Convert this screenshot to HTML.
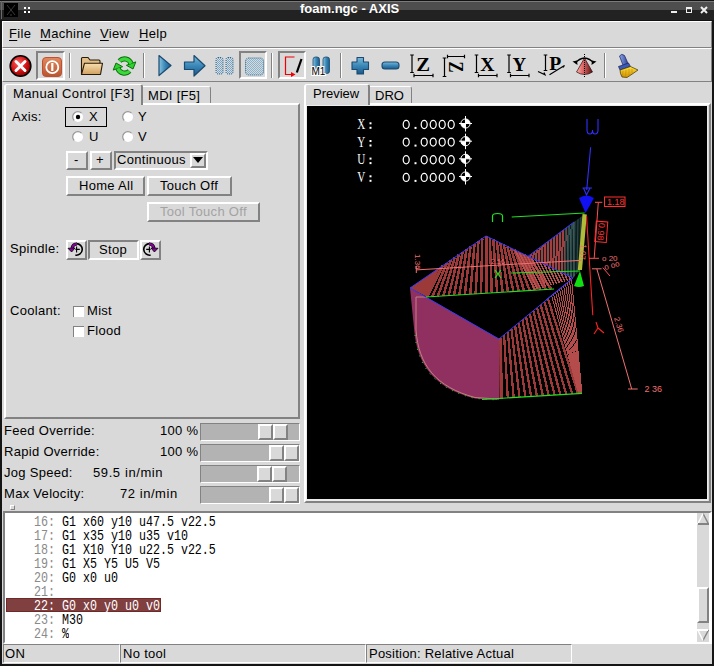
<!DOCTYPE html>
<html><head><meta charset="utf-8">
<style>
*{box-sizing:border-box;margin:0;padding:0}
html,body{width:714px;height:666px;overflow:hidden;background:#151515}
body{position:relative;font-family:"Liberation Sans",sans-serif;font-size:13px;color:#000}
.a{position:absolute}
.t{position:absolute;font-size:13px;line-height:13px;white-space:pre;letter-spacing:0.3px}
.r{position:absolute;border:2px solid;border-color:#fff #828282 #828282 #fff;background:#d9d9d9}
.s{position:absolute;border:2px solid;border-color:#828282 #fff #fff #828282;background:#d9d9d9}
.r1{position:absolute;border:1px solid;border-color:#fff #828282 #828282 #fff}
.s1{position:absolute;border:1px solid;border-color:#828282 #fff #fff #828282}
.u{text-decoration:underline;text-underline-offset:2px}
.sep{position:absolute;width:2px;border-left:1px solid #828282;border-right:1px solid #fff}
.mono{font-family:"Liberation Mono",monospace}
</style></head><body>
<!-- title bar -->
<div class="a" style="left:0;top:0;width:714px;height:21px;background:linear-gradient(#111 0,#111 1px,#7a7a7a 1px,#7a7a7a 2px,#4e4e4e 2px,#4e4e4e 10px,#222 10px,#222 20px,#111 20px)"></div>
<div class="a" style="left:1px;top:1px;width:1px;height:18px;background:#6a6a6a"></div>
<div class="a" style="left:4px;top:3px;width:14px;height:14px;background:#000"></div>
<svg class="a" style="left:4px;top:3px" width="14" height="14"><path d="M3 2 L11 12 M11 2 L3 12 M7 11 L7 13" stroke="#3a3a3a" stroke-width="1" fill="none"/></svg>
<div class="a" style="left:24px;top:7px;width:2px;height:2px;background:#fff"></div>
<div class="a" style="left:28px;top:7px;width:2px;height:2px;background:#fff"></div>
<div class="a" style="left:24px;top:11px;width:2px;height:2px;background:#fff"></div>
<div class="a" style="left:28px;top:11px;width:2px;height:2px;background:#fff"></div>
<div class="t" style="left:300px;top:2px;color:#fff;font-weight:bold;font-size:13px;letter-spacing:0">foam.ngc - AXIS</div>
<div class="a" style="left:671px;top:11px;width:6px;height:2px;background:#eee"></div>
<div class="a" style="left:686px;top:7px;width:6px;height:6px;border:1px solid #eee;border-top-width:2px"></div>
<svg class="a" style="left:700px;top:6px" width="8" height="8"><path d="M1 1 L7 7 M7 1 L1 7" stroke="#eee" stroke-width="2"/></svg>

<!-- main background -->
<div class="a" style="left:2px;top:21px;width:710px;height:643px;background:#d9d9d9"></div>
<!-- menubar -->
<div class="r1" style="left:2px;top:21px;width:710px;height:27px"></div>
<div class="t" style="left:9px;top:27px"><span class="u">F</span>ile</div>
<div class="t" style="left:40px;top:27px"><span class="u">M</span>achine</div>
<div class="t" style="left:100px;top:27px"><span class="u">V</span>iew</div>
<div class="t" style="left:139px;top:27px"><span class="u">H</span>elp</div>
<!-- toolbar -->
<div class="r1" style="left:2px;top:48px;width:710px;height:34px"></div>
<div class="s" style="left:36px;top:51px;width:29px;height:29px"></div>
<div class="s" style="left:239px;top:51px;width:28px;height:28px"></div>
<div class="s" style="left:278px;top:51px;width:28px;height:28px"></div>
<div class="sep" style="left:69px;top:53px;height:25px"></div>
<div class="sep" style="left:143px;top:53px;height:25px"></div>
<div class="sep" style="left:271px;top:53px;height:25px"></div>
<div class="sep" style="left:340px;top:53px;height:25px"></div>
<div class="sep" style="left:604px;top:53px;height:25px"></div><svg class="a" style="left:0;top:0" width="714" height="90" viewBox="0 0 714 90">
<defs>
<radialGradient id="gRed" cx="0.4" cy="0.35" r="0.7"><stop offset="0" stop-color="#ff6060"/><stop offset="0.6" stop-color="#d01010"/><stop offset="1" stop-color="#800000"/></radialGradient>
<linearGradient id="gOr" x1="0" y1="0" x2="0" y2="1"><stop offset="0" stop-color="#e08a60"/><stop offset="1" stop-color="#b85530"/></linearGradient>
<linearGradient id="gBlue" x1="0" y1="0" x2="0" y2="1"><stop offset="0" stop-color="#7ab8d8"/><stop offset="0.5" stop-color="#3a88b8"/><stop offset="1" stop-color="#1a5888"/></linearGradient>
<linearGradient id="gBlueH" x1="0" y1="0" x2="1" y2="0"><stop offset="0" stop-color="#8ac4e0"/><stop offset="0.5" stop-color="#3a88b8"/><stop offset="1" stop-color="#1a5a8a"/></linearGradient>
<linearGradient id="gTan" x1="0" y1="0" x2="0" y2="1"><stop offset="0" stop-color="#f8e0b0"/><stop offset="1" stop-color="#d0a060"/></linearGradient>
<linearGradient id="gGreen" x1="0" y1="0" x2="0" y2="1"><stop offset="0" stop-color="#90f090"/><stop offset="1" stop-color="#10a010"/></linearGradient>
<linearGradient id="gCone" x1="0" y1="0" x2="1" y2="0"><stop offset="0" stop-color="#f8b0a8"/><stop offset="0.45" stop-color="#d86060"/><stop offset="1" stop-color="#501010"/></linearGradient>
<pattern id="dots" width="2" height="2" patternUnits="userSpaceOnUse"><rect width="2" height="2" fill="#d9d9d9"/><rect width="1" height="1" fill="#7aa8c8"/><rect x="1" y="1" width="1" height="1" fill="#7aa8c8"/></pattern>
<pattern id="dots2" width="2" height="2" patternUnits="userSpaceOnUse"><rect width="2" height="2" fill="#d9d9d9"/><rect width="1" height="1" fill="#88b4d0"/><rect x="1" y="1" width="1" height="1" fill="#88b4d0"/></pattern>
</defs>
<!-- estop -->
<circle cx="20.5" cy="66" r="10.3" fill="url(#gRed)" stroke="#000" stroke-width="1.6"/>
<path d="M16 61.5 L25 70.5 M25 61.5 L16 70.5" stroke="#fff" stroke-width="3" stroke-linecap="round"/>
<!-- power -->
<rect x="42.5" y="57.5" width="19" height="19" rx="3.5" fill="url(#gOr)" stroke="#c05030" stroke-width="1"/>
<circle cx="52.3" cy="67.2" r="6" fill="none" stroke="#fff" stroke-width="1.8"/>
<path d="M52.3 63 V71" stroke="#fff" stroke-width="2.2"/>
<!-- folder -->
<path d="M81.5 74.5 V58.5 Q81.5 57.5 82.5 57.5 H88 L90 60 H99 Q100 60 100 61 V63" fill="#e0c088" stroke="#2a1a08" stroke-width="1.1"/>
<path d="M84.5 63.2 H102.5 L100.5 74.5 H81.5 Z" fill="url(#gTan)" stroke="#2a1a08" stroke-width="1.1" stroke-linejoin="round"/>
<!-- reload -->
<g>
<path d="M119.5 61 A7 7 0 0 1 131.1 63.6" stroke="#0a700a" stroke-width="5.2" fill="none"/>
<path d="M135.8 61.9 L126.4 65.3 L133 69 Z" fill="#30d030" stroke="#0a700a" stroke-width="1" stroke-linejoin="round"/>
<path d="M119.5 61 A7 7 0 0 1 131.1 63.6" stroke="#3ad83a" stroke-width="3.2" fill="none"/>
</g>
<g transform="rotate(180 124.5 66)">
<path d="M119.5 61 A7 7 0 0 1 131.1 63.6" stroke="#0a700a" stroke-width="5.2" fill="none"/>
<path d="M135.8 61.9 L126.4 65.3 L133 69 Z" fill="#30d030" stroke="#0a700a" stroke-width="1" stroke-linejoin="round"/>
<path d="M119.5 61 A7 7 0 0 1 131.1 63.6" stroke="#3ad83a" stroke-width="3.2" fill="none"/>
</g>
<!-- play -->
<path d="M159 55.5 L171 65.5 L159 75.5 Z" fill="url(#gBlueH)" stroke="#1a4a70" stroke-width="1.2" stroke-linejoin="round"/>
<!-- step -->
<path d="M184.5 62 H194 V55.5 L205 65.8 L194 76 V69.5 H184.5 Z" fill="url(#gBlue)" stroke="#1a4a70" stroke-width="1.2" stroke-linejoin="round"/>
<!-- pause disabled -->
<rect x="216" y="57.5" width="7" height="16.5" rx="2" fill="url(#dots)" stroke="#2a6890" stroke-width="1" stroke-dasharray="1 1"/>
<rect x="226" y="57.5" width="7" height="16.5" rx="2" fill="url(#dots)" stroke="#2a6890" stroke-width="1" stroke-dasharray="1 1"/>
<!-- stop disabled -->
<rect x="245.5" y="58" width="18" height="17" rx="3" fill="url(#dots2)" stroke="#2a6890" stroke-width="1" stroke-dasharray="1 1"/>
<!-- block delete -->
<path d="M294.5 57 H285.5 V74.5 H292" stroke="#f00000" stroke-width="1.2" fill="none"/>
<path d="M291 72 L295.5 74.5 L291 77 Z" fill="#f00000"/>
<path d="M301.5 59 L296.8 72.5" stroke="#000" stroke-width="2.2"/>
<!-- M1 -->
<rect x="313" y="57" width="6.5" height="16.5" rx="2.5" fill="url(#gBlueH)" stroke="#1a4a70" stroke-width="0.8"/>
<rect x="323" y="57" width="6.5" height="16.5" rx="2.5" fill="url(#gBlueH)" stroke="#1a4a70" stroke-width="0.8"/>
<text x="311.5" y="74.5" font-family="Liberation Sans" font-size="10" fill="#000" stroke="#fff" stroke-width="2" paint-order="stroke">M1</text>
<!-- plus / minus -->
<path d="M357 57.5 h6.5 a0 0 0 0 1 0 0 v4.5 h5 v7.5 h-5 v4.5 h-6.5 v-4.5 h-5 v-7.5 h5 z" fill="url(#gBlue)" stroke="#1a4a70" stroke-width="1.1" stroke-linejoin="round"/>
<rect x="382" y="62" width="17" height="7" rx="3" fill="url(#gBlue)" stroke="#1a4a70" stroke-width="1.1"/>
<path d="M410.2 55 H413.8 M412 55 V72.5 M410.2 72.5 H413.8" stroke="#000" stroke-width="1.2" fill="none"/><path d="M414 75.5 H433 M414 73.7 V77.3 M433 73.7 V77.3" stroke="#000" stroke-width="1.2" fill="none"/><text x="416.3" y="71" font-family="Liberation Serif" font-size="19.5" font-weight="bold" textLength="13.8" lengthAdjust="spacingAndGlyphs">Z</text><path d="M442.7 58 H446.3 M444.5 58 V76.5 M442.7 76.5 H446.3" stroke="#000" stroke-width="1.2" fill="none"/><path d="M447.5 56.5 H464.5 M447.5 54.7 V58.3 M464.5 54.7 V58.3" stroke="#000" stroke-width="1.2" fill="none"/><text transform="translate(449 61.5) rotate(90)" x="0" y="0" font-family="Liberation Serif" font-size="20.5" font-weight="bold" textLength="11" lengthAdjust="spacingAndGlyphs">Z</text><path d="M474.7 55 H478.3 M476.5 55 V72.5 M474.7 72.5 H478.3" stroke="#000" stroke-width="1.2" fill="none"/><path d="M478.5 75.5 H497 M478.5 73.7 V77.3 M497 73.7 V77.3" stroke="#000" stroke-width="1.2" fill="none"/><text x="480.3" y="71" font-family="Liberation Serif" font-size="19.5" font-weight="bold" textLength="14.2" lengthAdjust="spacingAndGlyphs">X</text><path d="M507.2 55 H510.8 M509 55 V72.5 M507.2 72.5 H510.8" stroke="#000" stroke-width="1.2" fill="none"/><path d="M510.5 75.5 H529 M510.5 73.7 V77.3 M529 73.7 V77.3" stroke="#000" stroke-width="1.2" fill="none"/><text x="512.5" y="71" font-family="Liberation Serif" font-size="19.5" font-weight="bold" textLength="13.6" lengthAdjust="spacingAndGlyphs">Y</text><path d="M543.7 55 H547.3 M545.5 55 V70.5 M543.7 70.5 H547.3" stroke="#000" stroke-width="1.2" fill="none"/><text x="549.2" y="70" font-family="Liberation Serif" font-size="18.5" font-weight="bold" textLength="12" lengthAdjust="spacingAndGlyphs">P</text><path d="M538 71.5 L545 74.8 L544 72.5 M549.5 74.8 L564.5 65.5 L563 67.5" stroke="#000" stroke-width="1.2" fill="none"/><path d="M584.5 58 L576.5 72 Q584.5 77 592.5 72 Z" fill="url(#gCone)" stroke="#301010" stroke-width="0.7"/>
<path d="M575.5 63 Q579 58.5 584.5 58 M593.5 63 Q590 58.5 584.5 58" stroke="#000" stroke-width="1.3" fill="none"/>
<path d="M572.5 61.5 L577.5 65 L577 60.5 Z M596.5 61.5 L591.5 65 L592 60.5 Z" fill="#000"/>
<path d="M584.5 54 V78" stroke="#000" stroke-width="1" stroke-dasharray="1 1"/>
<defs><linearGradient id="gHandle" x1="0" y1="0" x2="1" y2="0"><stop offset="0" stop-color="#8aa8e8"/><stop offset="1" stop-color="#2a3a90"/></linearGradient>
<linearGradient id="gBr" x1="0" y1="0" x2="0" y2="1"><stop offset="0" stop-color="#ffe040"/><stop offset="1" stop-color="#d09000"/></linearGradient></defs>
<path d="M619.5 56 Q621.5 53 624.5 55.5 L628.5 64.5 L623.5 66.5 Z" fill="url(#gHandle)" stroke="#1a2060" stroke-width="0.7"/>
<path d="M618.5 66.5 L628.5 63 L630.5 66.5 L620 70 Z" fill="#3a5ab8" stroke="#1a2060" stroke-width="0.7"/>
<path d="M620 70 L630.5 66.5 L638 70 L633 73.5 L627 77.5 L622 77 L620.5 73.5 Z" fill="url(#gBr)" stroke="#403000" stroke-width="0.7"/>
<path d="M623 71 L622.5 76 M626 70 L625.5 76.5 M629 69 L629 75.5 M632 69 L632 73" stroke="#c08800" stroke-width="0.6"/>
</svg>

<!-- left notebook -->
<div class="r" style="left:4px;top:103px;width:296px;height:316px"></div>
<!-- tabs -->
<div class="a" style="left:143px;top:86px;width:68px;height:17px;border-style:solid;border-width:1px 1px 0 0;border-color:#fff #828282;border-radius:0 3px 0 0;background:#d9d9d9"></div>
<div class="t" style="left:148px;top:89px">MDI [F5]</div>
<div class="a" style="left:4px;top:84px;width:139px;height:21px;border-style:solid;border-width:1px 2px 0 2px;border-color:#fff #828282 #828282 #fff;border-radius:3px 3px 0 0;background:#d9d9d9"></div>
<div class="t" style="left:13px;top:87px;letter-spacing:0.39px">Manual Control [F3]</div>

<!-- Axis -->
<div class="t" style="left:12px;top:110px">Axis:</div>
<div class="a" style="left:65px;top:107px;width:42px;height:20px;border:1px solid #000"></div>
<svg class="a" style="left:71px;top:110px" width="14" height="14"><circle cx="7" cy="7" r="5" fill="#fff"/><path d="M3.2 10.5 A5 5 0 0 1 10.5 3.2" stroke="#9a9a9a" stroke-width="1.2" fill="none"/><circle cx="7" cy="7" r="2.2" fill="#000"/></svg><svg class="a" style="left:120.5px;top:110px" width="14" height="14"><circle cx="7" cy="7" r="5" fill="#fff"/><path d="M3.2 10.5 A5 5 0 0 1 10.5 3.2" stroke="#9a9a9a" stroke-width="1.2" fill="none"/></svg><svg class="a" style="left:71px;top:129.5px" width="14" height="14"><circle cx="7" cy="7" r="5" fill="#fff"/><path d="M3.2 10.5 A5 5 0 0 1 10.5 3.2" stroke="#9a9a9a" stroke-width="1.2" fill="none"/></svg><svg class="a" style="left:120.5px;top:129.5px" width="14" height="14"><circle cx="7" cy="7" r="5" fill="#fff"/><path d="M3.2 10.5 A5 5 0 0 1 10.5 3.2" stroke="#9a9a9a" stroke-width="1.2" fill="none"/></svg>
<div class="t" style="left:89px;top:110px">X</div>
<div class="t" style="left:138px;top:110px">Y</div>
<div class="t" style="left:89px;top:130px">U</div>
<div class="t" style="left:138px;top:130px">V</div>

<!-- jog -->
<div class="r" style="left:66px;top:151px;width:22px;height:19px"></div>
<div class="t" style="left:74px;top:153px">-</div>
<div class="r" style="left:90px;top:151px;width:22px;height:19px"></div>
<div class="t" style="left:96px;top:153px">+</div>
<div class="s" style="left:114px;top:151px;width:94px;height:19px"></div>
<div class="t" style="left:117px;top:153px">Continuous</div>
<div class="r" style="left:190px;top:153px;width:16px;height:15px"></div>
<svg class="a" style="left:193px;top:157px" width="10" height="7"><path d="M0 0 H10 L5 6 Z" fill="#000"/></svg>

<div class="r" style="left:66px;top:176px;width:79px;height:20px"></div>
<div class="t" style="left:79px;top:179px">Home All</div>
<div class="r" style="left:147px;top:176px;width:85px;height:20px"></div>
<div class="t" style="left:160px;top:179px">Touch Off</div>
<div class="r" style="left:147px;top:202px;width:113px;height:20px"></div>
<div class="t" style="left:160px;top:205px;color:#a3a3a3">Tool Touch Off</div>

<!-- spindle -->
<div class="t" style="left:10px;top:242px">Spindle:</div>
<div class="r" style="left:66px;top:240px;width:21px;height:20px"></div>
<div class="s" style="left:88px;top:240px;width:51px;height:20px"></div>
<div class="t" style="left:99px;top:243px">Stop</div>
<div class="r" style="left:140px;top:240px;width:21px;height:20px"></div>
<svg class="a" style="left:66px;top:240px" width="20" height="20"><path d="M10.2 3.6 A5.8 5.8 0 1 1 9.4 15.1" stroke="#000" stroke-width="1.6" fill="none"/><path d="M10.6 6.4 V12.6 M9.4 9.4 H13.8" stroke="#000" stroke-width="1.1"/><path d="M11 4 Q7 4 6 8.2" stroke="#000" stroke-width="3.2" fill="none"/><path d="M11 4 Q7 4 6 8.2" stroke="#8a00a0" stroke-width="1.8" fill="none"/><path d="M2 8.3 L9 8 L5.6 12 Z" fill="#8a00a0" stroke="#000" stroke-width="0.8" stroke-linejoin="round"/></svg>
<svg class="a" style="left:140px;top:240px;transform:scaleX(-1)" width="20" height="20"><path d="M10.2 3.6 A5.8 5.8 0 1 1 9.4 15.1" stroke="#000" stroke-width="1.6" fill="none"/><path d="M10.6 6.4 V12.6 M9.4 9.4 H13.8" stroke="#000" stroke-width="1.1"/><path d="M11 4 Q7 4 6 8.2" stroke="#000" stroke-width="3.2" fill="none"/><path d="M11 4 Q7 4 6 8.2" stroke="#8a00a0" stroke-width="1.8" fill="none"/><path d="M2 8.3 L9 8 L5.6 12 Z" fill="#8a00a0" stroke="#000" stroke-width="0.8" stroke-linejoin="round"/></svg>

<!-- coolant -->
<div class="t" style="left:10px;top:304px">Coolant:</div>
<div class="a" style="left:73px;top:306px;width:11px;height:11px;background:#fff;border-top:1px solid #828282;border-left:1px solid #828282"></div>
<div class="t" style="left:87px;top:304px">Mist</div>
<div class="a" style="left:73px;top:326px;width:11px;height:11px;background:#fff;border-top:1px solid #828282;border-left:1px solid #828282"></div>
<div class="t" style="left:87px;top:324px">Flood</div>

<!-- sliders -->
<div class="t" style="left:4px;top:424px">Feed Override:</div>
<div class="t" style="left:160px;top:424px">100 %</div>
<div class="t" style="left:4px;top:445px">Rapid Override:</div>
<div class="t" style="left:160px;top:445px">100 %</div>
<div class="t" style="left:4px;top:466px">Jog Speed:</div>
<div class="t" style="left:93px;top:466px;letter-spacing:0.6px">59.5 in/min</div>
<div class="t" style="left:4px;top:487px">Max Velocity:</div>
<div class="t" style="left:120px;top:487px;letter-spacing:0.55px">72 in/min</div>
<div class="a" style="left:200px;top:423px;width:100px;height:18px;background:#b3b3b3;border:1px solid;border-color:#828282 #fff #fff #828282"></div><div class="r" style="left:258px;top:424px;width:15px;height:16px"></div><div class="r" style="left:273px;top:424px;width:15px;height:16px"></div><div class="a" style="left:200px;top:444px;width:100px;height:18px;background:#b3b3b3;border:1px solid;border-color:#828282 #fff #fff #828282"></div><div class="r" style="left:269px;top:445px;width:15px;height:16px"></div><div class="r" style="left:284px;top:445px;width:15px;height:16px"></div><div class="a" style="left:200px;top:465px;width:100px;height:18px;background:#b3b3b3;border:1px solid;border-color:#828282 #fff #fff #828282"></div><div class="r" style="left:257px;top:466px;width:15px;height:16px"></div><div class="r" style="left:272px;top:466px;width:15px;height:16px"></div><div class="a" style="left:200px;top:486px;width:100px;height:18px;background:#b3b3b3;border:1px solid;border-color:#828282 #fff #fff #828282"></div><div class="r" style="left:269px;top:487px;width:15px;height:16px"></div><div class="r" style="left:284px;top:487px;width:15px;height:16px"></div>

<!-- right notebook -->
<div class="r" style="left:304px;top:103px;width:407px;height:400px"></div>
<div class="a" style="left:370px;top:86px;width:42px;height:17px;border-style:solid;border-width:1px 1px 0 0;border-color:#fff #828282;border-radius:0 3px 0 0;background:#d9d9d9"></div>
<div class="t" style="left:375px;top:89px;letter-spacing:0">DRO</div>
<div class="a" style="left:304px;top:84px;width:66px;height:21px;border-style:solid;border-width:1px 2px 0 2px;border-color:#fff #828282 #828282 #fff;border-radius:3px 3px 0 0;background:#d9d9d9"></div>
<div class="t" style="left:313px;top:87px;letter-spacing:0">Preview</div>
<div class="a" style="left:306px;top:105px;width:402px;height:396px;background:#ececec"></div>
<div class="a" style="left:307px;top:106px;width:400px;height:393px;background:#000;overflow:hidden" id="canvas"><svg class="a" style="left:0;top:0" width="400" height="393" viewBox="307 106 400 393"><text x="357.3" y="128.9" font-family="Liberation Serif" font-size="13.8" fill="#fff" textLength="8" lengthAdjust="spacingAndGlyphs">X</text><rect x="369.5" y="122.3" width="2" height="2" fill="#fff"/><rect x="369.5" y="126.8" width="2" height="2" fill="#fff"/><ellipse cx="406.2" cy="124.4" rx="3" ry="4.1" fill="none" stroke="#fff" stroke-width="1.25"/><ellipse cx="424.2" cy="124.4" rx="3" ry="4.1" fill="none" stroke="#fff" stroke-width="1.25"/><ellipse cx="433.2" cy="124.4" rx="3" ry="4.1" fill="none" stroke="#fff" stroke-width="1.25"/><ellipse cx="442.2" cy="124.4" rx="3" ry="4.1" fill="none" stroke="#fff" stroke-width="1.25"/><ellipse cx="451.2" cy="124.4" rx="3" ry="4.1" fill="none" stroke="#fff" stroke-width="1.25"/><rect x="414.5" y="126.9" width="2" height="2" fill="#fff"/><circle cx="465.5" cy="123.5" r="4.6" fill="#000" stroke="#fff" stroke-width="1"/><path d="M465.5 123.5 h4.6 a4.6 4.6 0 0 0 -4.6 -4.6 Z M465.5 123.5 h-4.6 a4.6 4.6 0 0 0 4.6 4.6 Z" fill="#fff"/><path d="M459 123.5 H472 M465.5 116.0 V131.5" stroke="#fff" stroke-width="1"/><text x="357.3" y="146.6" font-family="Liberation Serif" font-size="13.8" fill="#fff" textLength="8" lengthAdjust="spacingAndGlyphs">Y</text><rect x="369.5" y="140.0" width="2" height="2" fill="#fff"/><rect x="369.5" y="144.5" width="2" height="2" fill="#fff"/><ellipse cx="406.2" cy="142.1" rx="3" ry="4.1" fill="none" stroke="#fff" stroke-width="1.25"/><ellipse cx="424.2" cy="142.1" rx="3" ry="4.1" fill="none" stroke="#fff" stroke-width="1.25"/><ellipse cx="433.2" cy="142.1" rx="3" ry="4.1" fill="none" stroke="#fff" stroke-width="1.25"/><ellipse cx="442.2" cy="142.1" rx="3" ry="4.1" fill="none" stroke="#fff" stroke-width="1.25"/><ellipse cx="451.2" cy="142.1" rx="3" ry="4.1" fill="none" stroke="#fff" stroke-width="1.25"/><rect x="414.5" y="144.6" width="2" height="2" fill="#fff"/><circle cx="465.5" cy="141.2" r="4.6" fill="#000" stroke="#fff" stroke-width="1"/><path d="M465.5 141.2 h4.6 a4.6 4.6 0 0 0 -4.6 -4.6 Z M465.5 141.2 h-4.6 a4.6 4.6 0 0 0 4.6 4.6 Z" fill="#fff"/><path d="M459 141.2 H472 M465.5 133.7 V149.2" stroke="#fff" stroke-width="1"/><text x="357.3" y="164.2" font-family="Liberation Serif" font-size="13.8" fill="#fff" textLength="8" lengthAdjust="spacingAndGlyphs">U</text><rect x="369.5" y="157.6" width="2" height="2" fill="#fff"/><rect x="369.5" y="162.1" width="2" height="2" fill="#fff"/><ellipse cx="406.2" cy="159.7" rx="3" ry="4.1" fill="none" stroke="#fff" stroke-width="1.25"/><ellipse cx="424.2" cy="159.7" rx="3" ry="4.1" fill="none" stroke="#fff" stroke-width="1.25"/><ellipse cx="433.2" cy="159.7" rx="3" ry="4.1" fill="none" stroke="#fff" stroke-width="1.25"/><ellipse cx="442.2" cy="159.7" rx="3" ry="4.1" fill="none" stroke="#fff" stroke-width="1.25"/><ellipse cx="451.2" cy="159.7" rx="3" ry="4.1" fill="none" stroke="#fff" stroke-width="1.25"/><rect x="414.5" y="162.2" width="2" height="2" fill="#fff"/><circle cx="465.5" cy="158.8" r="4.6" fill="#000" stroke="#fff" stroke-width="1"/><path d="M465.5 158.8 h4.6 a4.6 4.6 0 0 0 -4.6 -4.6 Z M465.5 158.8 h-4.6 a4.6 4.6 0 0 0 4.6 4.6 Z" fill="#fff"/><path d="M459 158.8 H472 M465.5 151.3 V166.8" stroke="#fff" stroke-width="1"/><text x="357.3" y="181.9" font-family="Liberation Serif" font-size="13.8" fill="#fff" textLength="8" lengthAdjust="spacingAndGlyphs">V</text><rect x="369.5" y="175.3" width="2" height="2" fill="#fff"/><rect x="369.5" y="179.8" width="2" height="2" fill="#fff"/><ellipse cx="406.2" cy="177.4" rx="3" ry="4.1" fill="none" stroke="#fff" stroke-width="1.25"/><ellipse cx="424.2" cy="177.4" rx="3" ry="4.1" fill="none" stroke="#fff" stroke-width="1.25"/><ellipse cx="433.2" cy="177.4" rx="3" ry="4.1" fill="none" stroke="#fff" stroke-width="1.25"/><ellipse cx="442.2" cy="177.4" rx="3" ry="4.1" fill="none" stroke="#fff" stroke-width="1.25"/><ellipse cx="451.2" cy="177.4" rx="3" ry="4.1" fill="none" stroke="#fff" stroke-width="1.25"/><rect x="414.5" y="179.9" width="2" height="2" fill="#fff"/><circle cx="465.5" cy="176.5" r="4.6" fill="#000" stroke="#fff" stroke-width="1"/><path d="M465.5 176.5 h4.6 a4.6 4.6 0 0 0 -4.6 -4.6 Z M465.5 176.5 h-4.6 a4.6 4.6 0 0 0 4.6 4.6 Z" fill="#fff"/><path d="M459 176.5 H472 M465.5 169.0 V184.5" stroke="#fff" stroke-width="1"/><path d="M410 288 L499 339 V400 L475 398.5 C435 388.5 416.5 365 414 328 Z" fill="#903060"/><path d="M426 297 H416 V330 C418.5 365 436 387 475 397.5 L497 399" stroke="#c08080" stroke-width="1" fill="none"/><path d="M415 335 C418 368 436 389 475 398.5 L497 400" stroke="#20e020" stroke-width="1" stroke-dasharray="1 6" fill="none"/><defs><clipPath id="cpb"><path d="M528 256.3 L574 222 L585 214 L580 270 L573 278 Z"/></clipPath></defs><path d="M528 256.3 L574 222 L585 214 L580 270 L573 278 Z" fill="#0e1e1e"/><g clip-path="url(#cpb)"><line x1="531.0" y1="254.1" x2="530.0" y2="257.7" stroke="#a04040" stroke-width="2" shape-rendering="crispEdges"/><line x1="533.9" y1="251.9" x2="532.9" y2="259.1" stroke="#a04040" stroke-width="2" shape-rendering="crispEdges"/><line x1="536.8" y1="249.7" x2="535.8" y2="260.5" stroke="#a04040" stroke-width="2" shape-rendering="crispEdges"/><line x1="539.7" y1="247.6" x2="538.7" y2="261.9" stroke="#a04040" stroke-width="2" shape-rendering="crispEdges"/><line x1="542.6" y1="245.4" x2="541.6" y2="263.3" stroke="#a04040" stroke-width="2" shape-rendering="crispEdges"/><line x1="545.5" y1="243.3" x2="544.5" y2="264.7" stroke="#a04040" stroke-width="2" shape-rendering="crispEdges"/><line x1="548.4" y1="241.1" x2="547.4" y2="266.1" stroke="#a04040" stroke-width="2" shape-rendering="crispEdges"/><line x1="551.3" y1="238.9" x2="550.3" y2="267.5" stroke="#a04040" stroke-width="2" shape-rendering="crispEdges"/><line x1="554.2" y1="236.8" x2="553.2" y2="268.9" stroke="#a04040" stroke-width="2" shape-rendering="crispEdges"/><line x1="557.1" y1="234.6" x2="556.1" y2="270.3" stroke="#a04040" stroke-width="2" shape-rendering="crispEdges"/><line x1="560.0" y1="232.4" x2="559.0" y2="271.7" stroke="#a04040" stroke-width="2" shape-rendering="crispEdges"/><line x1="562.9" y1="230.3" x2="561.9" y2="273.1" stroke="#a04040" stroke-width="2" shape-rendering="crispEdges"/><line x1="565.8" y1="228.1" x2="564.8" y2="274.5" stroke="#a04040" stroke-width="2" shape-rendering="crispEdges"/><line x1="568.7" y1="226.0" x2="567.7" y2="275.9" stroke="#3a5858" stroke-width="2" shape-rendering="crispEdges"/><line x1="571.6" y1="223.8" x2="570.6" y2="277.3" stroke="#3a5858" stroke-width="2" shape-rendering="crispEdges"/><line x1="574.5" y1="221.6" x2="573.5" y2="278.7" stroke="#3a5858" stroke-width="2" shape-rendering="crispEdges"/><line x1="566.0" y1="222.0" x2="565.0" y2="274.0" stroke="#2a4646" stroke-width="1.2"/><line x1="569.0" y1="220.5" x2="568.0" y2="274.0" stroke="#2a4646" stroke-width="1.2"/><line x1="572.0" y1="219.0" x2="571.0" y2="274.0" stroke="#2a4646" stroke-width="1.2"/><line x1="575.0" y1="217.5" x2="574.0" y2="274.0" stroke="#2a4646" stroke-width="1.2"/><line x1="578.0" y1="216.0" x2="577.0" y2="274.0" stroke="#2a4646" stroke-width="1.2"/><line x1="581.0" y1="214.5" x2="580.0" y2="274.0" stroke="#2a4646" stroke-width="1.2"/></g><path d="M582.5 214 L586.8 214.5 L582 270 L577.8 270 Z" fill="#b0bc38"/><line x1="500.5" y1="337.8" x2="502.0" y2="398.8" stroke="#9c3a3a" stroke-width="2.3" shape-rendering="crispEdges"/><line x1="504.1" y1="334.8" x2="507.8" y2="398.4" stroke="#9c3a3a" stroke-width="2.3" shape-rendering="crispEdges"/><line x1="507.8" y1="331.7" x2="513.7" y2="397.9" stroke="#9c3a3a" stroke-width="2.3" shape-rendering="crispEdges"/><line x1="511.4" y1="328.7" x2="519.5" y2="397.5" stroke="#9c3a3a" stroke-width="2.3" shape-rendering="crispEdges"/><line x1="515.1" y1="325.7" x2="525.4" y2="397.1" stroke="#9c3a3a" stroke-width="2.3" shape-rendering="crispEdges"/><line x1="518.7" y1="322.7" x2="531.2" y2="396.7" stroke="#9c3a3a" stroke-width="2.3" shape-rendering="crispEdges"/><line x1="522.4" y1="319.7" x2="537.0" y2="396.3" stroke="#9c3a3a" stroke-width="2.3" shape-rendering="crispEdges"/><line x1="526.0" y1="316.7" x2="542.9" y2="395.8" stroke="#9c3a3a" stroke-width="2.3" shape-rendering="crispEdges"/><line x1="529.7" y1="313.7" x2="548.7" y2="395.4" stroke="#9c3a3a" stroke-width="2.3" shape-rendering="crispEdges"/><line x1="533.3" y1="310.7" x2="554.6" y2="395.0" stroke="#9c3a3a" stroke-width="2.3" shape-rendering="crispEdges"/><line x1="537.0" y1="307.7" x2="560.4" y2="394.6" stroke="#9c3a3a" stroke-width="2.3" shape-rendering="crispEdges"/><line x1="540.6" y1="304.7" x2="566.2" y2="394.1" stroke="#9c3a3a" stroke-width="2.3" shape-rendering="crispEdges"/><line x1="544.3" y1="301.7" x2="572.1" y2="393.7" stroke="#9c3a3a" stroke-width="2.3" shape-rendering="crispEdges"/><line x1="547.9" y1="298.6" x2="577.9" y2="393.3" stroke="#9c3a3a" stroke-width="2.3" shape-rendering="crispEdges"/><line x1="551.6" y1="295.6" x2="578.6" y2="393.2" stroke="#b44c4c" stroke-width="1" shape-rendering="crispEdges"/><line x1="553.6" y1="294.0" x2="578.9" y2="393.2" stroke="#b44c4c" stroke-width="1" shape-rendering="crispEdges"/><line x1="555.6" y1="292.3" x2="579.2" y2="393.2" stroke="#b44c4c" stroke-width="1" shape-rendering="crispEdges"/><line x1="557.6" y1="290.7" x2="579.5" y2="393.2" stroke="#b44c4c" stroke-width="1" shape-rendering="crispEdges"/><line x1="559.6" y1="289.0" x2="579.9" y2="393.2" stroke="#b44c4c" stroke-width="1" shape-rendering="crispEdges"/><line x1="561.6" y1="287.4" x2="580.2" y2="393.1" stroke="#b44c4c" stroke-width="1" shape-rendering="crispEdges"/><line x1="563.6" y1="285.7" x2="580.5" y2="393.1" stroke="#b44c4c" stroke-width="1" shape-rendering="crispEdges"/><line x1="565.6" y1="284.1" x2="580.8" y2="393.1" stroke="#b44c4c" stroke-width="1" shape-rendering="crispEdges"/><line x1="567.6" y1="282.5" x2="581.1" y2="393.1" stroke="#b44c4c" stroke-width="1" shape-rendering="crispEdges"/><line x1="569.6" y1="280.8" x2="581.5" y2="393.0" stroke="#b44c4c" stroke-width="1" shape-rendering="crispEdges"/><line x1="571.6" y1="279.2" x2="581.8" y2="393.0" stroke="#b44c4c" stroke-width="1" shape-rendering="crispEdges"/><line x1="500.5" y1="339" x2="501" y2="399" stroke="#9c3a3a" stroke-width="3"/><path d="M410 288 L486 236 L573 278 L554 289 L426 297 Z" fill="#000"/><line x1="442.9" y1="265.5" x2="427.0" y2="296.9" stroke="#9c3a3a" stroke-width="2.5" shape-rendering="crispEdges"/><line x1="446.9" y1="262.8" x2="432.4" y2="296.6" stroke="#9c3a3a" stroke-width="2.5" shape-rendering="crispEdges"/><line x1="450.8" y1="260.1" x2="437.8" y2="296.3" stroke="#9c3a3a" stroke-width="2.5" shape-rendering="crispEdges"/><line x1="454.8" y1="257.4" x2="443.2" y2="295.9" stroke="#9c3a3a" stroke-width="2.5" shape-rendering="crispEdges"/><line x1="458.7" y1="254.7" x2="448.6" y2="295.6" stroke="#9c3a3a" stroke-width="2.5" shape-rendering="crispEdges"/><line x1="462.6" y1="252.0" x2="454.0" y2="295.2" stroke="#9c3a3a" stroke-width="2.5" shape-rendering="crispEdges"/><line x1="466.6" y1="249.3" x2="459.4" y2="294.9" stroke="#9c3a3a" stroke-width="2.5" shape-rendering="crispEdges"/><line x1="470.5" y1="246.6" x2="464.8" y2="294.6" stroke="#9c3a3a" stroke-width="2.5" shape-rendering="crispEdges"/><line x1="474.5" y1="243.9" x2="470.2" y2="294.2" stroke="#9c3a3a" stroke-width="2.5" shape-rendering="crispEdges"/><line x1="478.4" y1="241.2" x2="475.6" y2="293.9" stroke="#9c3a3a" stroke-width="2.5" shape-rendering="crispEdges"/><line x1="482.3" y1="238.5" x2="481.0" y2="293.6" stroke="#9c3a3a" stroke-width="2.5" shape-rendering="crispEdges"/><line x1="486.3" y1="236.1" x2="486.4" y2="293.2" stroke="#9c3a3a" stroke-width="2.5" shape-rendering="crispEdges"/><line x1="489.8" y1="237.8" x2="491.8" y2="292.9" stroke="#9c3a3a" stroke-width="2.5" shape-rendering="crispEdges"/><line x1="493.3" y1="239.5" x2="497.2" y2="292.6" stroke="#9c3a3a" stroke-width="2.5" shape-rendering="crispEdges"/><line x1="496.8" y1="241.2" x2="502.6" y2="292.2" stroke="#9c3a3a" stroke-width="2.5" shape-rendering="crispEdges"/><line x1="500.3" y1="242.9" x2="508.0" y2="291.9" stroke="#9c3a3a" stroke-width="2.5" shape-rendering="crispEdges"/><line x1="503.8" y1="244.6" x2="513.4" y2="291.5" stroke="#9c3a3a" stroke-width="2.5" shape-rendering="crispEdges"/><line x1="507.3" y1="246.3" x2="518.8" y2="291.2" stroke="#9c3a3a" stroke-width="2.5" shape-rendering="crispEdges"/><line x1="510.8" y1="248.0" x2="524.2" y2="290.9" stroke="#9c3a3a" stroke-width="2.5" shape-rendering="crispEdges"/><line x1="514.3" y1="249.7" x2="529.6" y2="290.5" stroke="#9c3a3a" stroke-width="2.5" shape-rendering="crispEdges"/><line x1="517.8" y1="251.4" x2="535.0" y2="290.2" stroke="#9c3a3a" stroke-width="2.5" shape-rendering="crispEdges"/><line x1="521.4" y1="253.1" x2="540.4" y2="289.9" stroke="#9c3a3a" stroke-width="2.5" shape-rendering="crispEdges"/><line x1="524.9" y1="254.8" x2="545.8" y2="289.5" stroke="#9c3a3a" stroke-width="2.5" shape-rendering="crispEdges"/><line x1="528.4" y1="256.5" x2="551.2" y2="289.2" stroke="#9c3a3a" stroke-width="2.5" shape-rendering="crispEdges"/><path d="M410 288 L440 267.5 L427 297 Z" fill="#9c3a3a"/><line x1="515.0" y1="250.0" x2="535.0" y2="290.2" stroke="#b85050" stroke-width="1.5" shape-rendering="crispEdges"/><line x1="519.1" y1="252.0" x2="537.7" y2="289.4" stroke="#b85050" stroke-width="1.5" shape-rendering="crispEdges"/><line x1="523.3" y1="254.0" x2="540.4" y2="288.6" stroke="#b85050" stroke-width="1.5" shape-rendering="crispEdges"/><line x1="527.4" y1="256.0" x2="543.1" y2="287.8" stroke="#b85050" stroke-width="1.5" shape-rendering="crispEdges"/><line x1="531.6" y1="258.0" x2="545.9" y2="287.0" stroke="#b85050" stroke-width="1.5" shape-rendering="crispEdges"/><line x1="535.7" y1="260.0" x2="548.6" y2="286.2" stroke="#b85050" stroke-width="1.5" shape-rendering="crispEdges"/><line x1="539.9" y1="262.0" x2="551.3" y2="285.4" stroke="#b85050" stroke-width="1.5" shape-rendering="crispEdges"/><line x1="544.0" y1="264.0" x2="554.0" y2="284.6" stroke="#b85050" stroke-width="1.5" shape-rendering="crispEdges"/><line x1="548.1" y1="266.0" x2="556.7" y2="283.8" stroke="#b85050" stroke-width="1.5" shape-rendering="crispEdges"/><line x1="552.3" y1="268.0" x2="559.4" y2="283.0" stroke="#b85050" stroke-width="1.5" shape-rendering="crispEdges"/><line x1="556.4" y1="270.0" x2="562.1" y2="282.2" stroke="#b85050" stroke-width="1.5" shape-rendering="crispEdges"/><line x1="560.6" y1="272.0" x2="564.9" y2="281.4" stroke="#b85050" stroke-width="1.5" shape-rendering="crispEdges"/><line x1="564.7" y1="274.0" x2="567.6" y2="280.6" stroke="#b85050" stroke-width="1.5" shape-rendering="crispEdges"/><line x1="568.9" y1="276.0" x2="570.3" y2="279.8" stroke="#b85050" stroke-width="1.5" shape-rendering="crispEdges"/><path d="M410 288 L486 236 L573 278 L499 339 Z M528 256.3 L574 222 M573 278 L546 300" stroke="#3a3aff" stroke-width="1" fill="none"/><path d="M426 297 L554 289 M511 273 L580 271 M511.7 217 L584.7 213 M482 399.5 L582 393.3 M492.5 222 V216 Q492.5 213.5 497.5 213.5 Q502.5 213.5 502.5 216 V222 M495 270 L501 278 M501 270 L495 278" stroke="#20e020" stroke-width="1.2" fill="none"/><path d="M580 271 L574 286 Q579 288 584 286 Z" fill="#10e010"/><path d="M590.6 147.3 L586.7 190 M582.5 188 H592 M583.5 188 L586.5 195 L590 188" stroke="#3030ff" stroke-width="1.1" fill="none"/><path d="M579 198 Q586.5 193 594 198 L585.6 213 Z" fill="#1010f0"/><path d="M587 119 V130 Q587 134 590 134 Q592.5 134 592.5 130 Q592.5 134 595 134 Q598 134 598 130 V119" stroke="#3030ff" stroke-width="1.1" fill="none"/><path d="M586.5 216 L592.8 315.3 M596 322 L598 328 L594 334 M598 328 L604 333" stroke="#ff2020" stroke-width="1.1" fill="none"/><path d="M595 202.3 H602.3 M598.3 202.6 L594.2 258 M589.2 258.3 H599 M602.8 267.6 L610 276" stroke="#ff5050" stroke-width="1" fill="none"/><rect x="604.5" y="197" width="20.5" height="9.5" fill="none" stroke="#ff3030" stroke-width="1"/><text x="607" y="205" font-family="Liberation Sans" font-size="9" fill="#ff3030">1.18</text><g transform="rotate(4.3 601 232)"><rect x="595.5" y="221.5" width="11.5" height="20.5" fill="none" stroke="#ff3030" stroke-width="1"/><text transform="translate(598 223) rotate(90)" font-family="Liberation Sans" font-size="9" fill="#ff3030">0.98</text></g><path d="M596.8 268.8 L631.7 389 M592 268.8 H601.6 M628 389 H637.7 M416.3 269.9 L581.5 260.3 M416.3 266 V273" stroke="#f07070" stroke-width="1" fill="none"/><text x="602" y="260.5" font-family="Liberation Sans" font-size="8" fill="#f07070">o 20</text><text transform="translate(605 270) rotate(-15)" font-family="Liberation Sans" font-size="8" fill="#f07070">o oo</text><text x="644.5" y="391.5" font-family="Liberation Sans" font-size="9" fill="#f07070">2 36</text><text transform="translate(614 318) rotate(73)" font-family="Liberation Sans" font-size="8" fill="#f07070">2.36</text><text transform="translate(415 254) rotate(90)" font-family="Liberation Sans" font-size="8" fill="#f07070">1.36</text><text x="491" y="264" font-family="Liberation Sans" font-size="7" fill="#f07070">2.56</text><text transform="translate(581 244) rotate(95)" font-family="Liberation Sans" font-size="8" fill="#f07070">1.07</text></svg></div>

<!-- text area -->
<div class="a" style="left:3px;top:511px;width:709px;height:133px;background:#fff;border:2px solid;border-color:#828282 #fff #fff #828282"></div>
<div class="a mono" style="left:6px;top:515.5px;font-size:11.67px;line-height:14px;white-space:pre;transform:scaleY(1.2);transform-origin:0 11px"><span style="color:#8a8a8a">    16: </span><span style="color:#000">G1 x60 y10 u47.5 v22.5</span></div><div class="a mono" style="left:6px;top:529.5px;font-size:11.67px;line-height:14px;white-space:pre;transform:scaleY(1.2);transform-origin:0 11px"><span style="color:#8a8a8a">    17: </span><span style="color:#000">G1 x35 y10 u35 v10</span></div><div class="a mono" style="left:6px;top:543.5px;font-size:11.67px;line-height:14px;white-space:pre;transform:scaleY(1.2);transform-origin:0 11px"><span style="color:#8a8a8a">    18: </span><span style="color:#000">G1 X10 Y10 u22.5 v22.5</span></div><div class="a mono" style="left:6px;top:557.5px;font-size:11.67px;line-height:14px;white-space:pre;transform:scaleY(1.2);transform-origin:0 11px"><span style="color:#8a8a8a">    19: </span><span style="color:#000">G1 X5 Y5 U5 V5</span></div><div class="a mono" style="left:6px;top:571.5px;font-size:11.67px;line-height:14px;white-space:pre;transform:scaleY(1.2);transform-origin:0 11px"><span style="color:#8a8a8a">    20: </span><span style="color:#000">G0 x0 u0</span></div><div class="a mono" style="left:6px;top:585.5px;font-size:11.67px;line-height:14px;white-space:pre;transform:scaleY(1.2);transform-origin:0 11px"><span style="color:#8a8a8a">    21: </span><span style="color:#000"></span></div><div class="a" style="left:6px;top:598px;width:155px;height:14px;background:#804040;border:1px solid #702828"></div><div class="a mono" style="left:6px;top:599.5px;font-size:11.67px;line-height:14px;white-space:pre;transform:scaleY(1.2);transform-origin:0 11px"><span style="color:#fff">    22: </span><span style="color:#fff">G0 x0 y0 u0 v0</span></div><div class="a mono" style="left:6px;top:613.5px;font-size:11.67px;line-height:14px;white-space:pre;transform:scaleY(1.2);transform-origin:0 11px"><span style="color:#8a8a8a">    23: </span><span style="color:#000">M30</span></div><div class="a mono" style="left:6px;top:627.5px;font-size:11.67px;line-height:14px;white-space:pre;transform:scaleY(1.2);transform-origin:0 11px"><span style="color:#8a8a8a">    24: </span><span style="color:#000">%</span></div>
<div class="a" style="left:697px;top:513px;width:12px;height:129px;background:#d9d9d9"></div>
<svg class="a" style="left:697px;top:513px" width="12" height="12"><path d="M6 0.5 L11.5 11" stroke="#828282" stroke-width="1.4" fill="none"/><path d="M6 0.5 L0.8 11" stroke="#fff" stroke-width="1.4" fill="none"/><path d="M1 11 H12" stroke="#828282" stroke-width="2"/></svg>
<svg class="a" style="left:697px;top:629px" width="12" height="12"><path d="M6 11.5 L11.5 1" stroke="#828282" stroke-width="1.4" fill="none"/><path d="M6 11.5 L0.8 1" stroke="#fff" stroke-width="1.4" fill="none"/><path d="M0 1 H11" stroke="#fff" stroke-width="2"/></svg>
<div class="r" style="left:697px;top:587px;width:12px;height:36px"></div>
<div class="a" style="left:10px;top:505px;width:5px;height:5px;border:1px solid;border-color:#fff #828282 #828282 #fff;background:#d9d9d9"></div>


<!-- status bar -->
<div class="s1" style="left:3px;top:644px;width:117px;height:19px"></div>
<div class="t" style="left:5px;top:647px">ON</div>
<div class="s1" style="left:120px;top:644px;width:246px;height:19px"></div>
<div class="t" style="left:123px;top:647px">No tool</div>
<div class="s1" style="left:366px;top:644px;width:206px;height:19px"></div>
<div class="t" style="left:369px;top:647px;letter-spacing:0.225px">Position: Relative Actual</div>
</body></html>
